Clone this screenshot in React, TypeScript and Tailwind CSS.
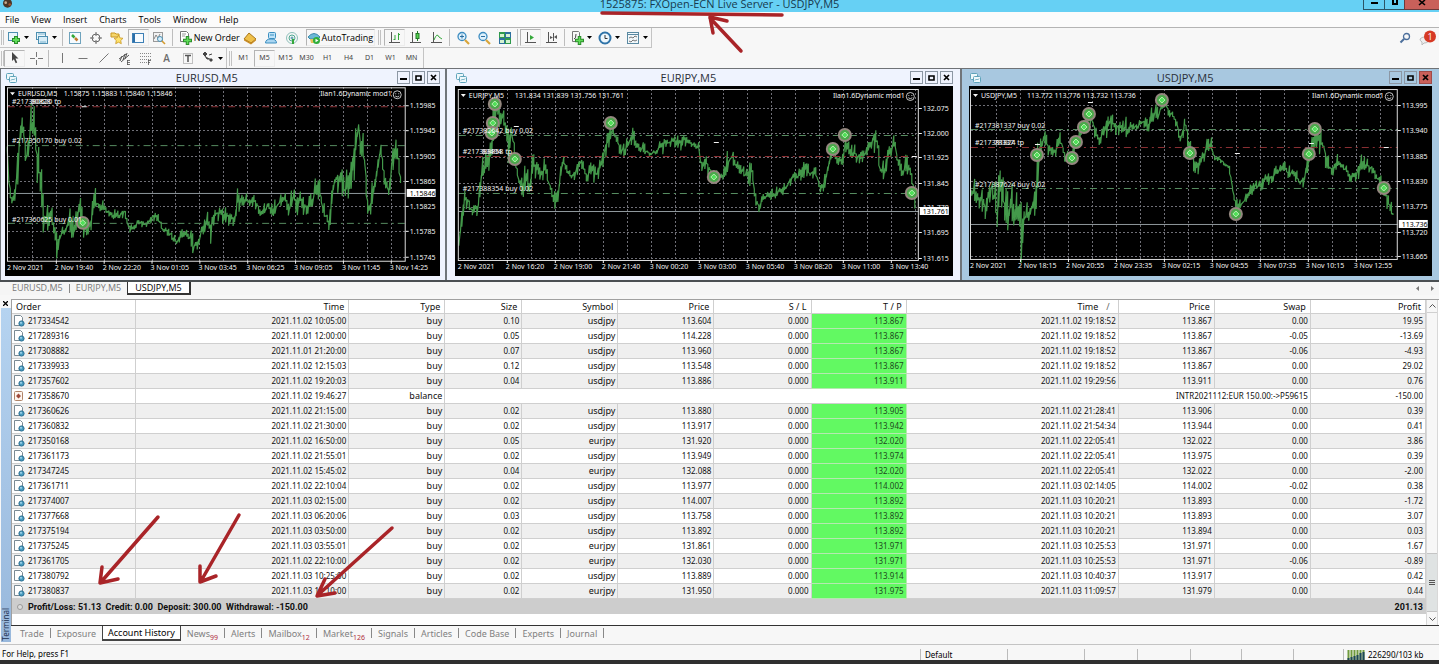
import React from "react";

type Point = [number, number, number];
type Marker = [number, number];

interface ChartData {
  symbol: string;
  ohlc: string;
  box: [number, number, number, number];
  frame: [number, number, number, number];
  gridX: number;
  prices: [number, string][];
  times: string[];
  last: [number, string];
  levels: { y: number; label?: string; labelY: number; red?: boolean; overlap?: string }[];
  markers: Marker[];
  ticks: Marker[];
  series: Point[];
}

const eurusd: ChartData = {
  symbol: "EURUSD,M5",
  ohlc: "1.15875 1.15883 1.15840 1.15846",
  box: [5, 86, 436, 190],
  frame: [8, 87, 407, 261],
  gridX: 32,
  prices: [
    [105, "1.15985"], [130, "1.15945"], [156, "1.15905"], [181, "1.15865"],
    [206, "1.15825"], [231, "1.15785"], [257, "1.15745"],
  ],
  times: ["2 Nov 2021", "2 Nov 19:40", "2 Nov 22:20", "3 Nov 01:05", "3 Nov 03:45", "3 Nov 06:25", "3 Nov 09:05", "3 Nov 11:45", "3 Nov 14:25"],
  last: [193, "1.15846"],
  levels: [
    { y: 106, label: "#217380620 tp", labelY: 104, red: true, overlap: "80828" },
    { y: 145, label: "#217350170 buy 0.02", labelY: 143 },
    { y: 223, label: "#217360625 buy 0.01", labelY: 222 },
  ],
  markers: [[83, 223]],
  ticks: [[84, 106]],
  series: [
    [22, 240, 30], [28, 380, 20], [38, 410, 25], [48, 350, 50], [56, 260, 70], [64, 160, 40], [72, 200, 60], [80, 270, 40], [88, 220, 40],
    [96, 150, 60], [104, 200, 60], [112, 300, 50], [122, 320, 60], [130, 450, 50], [140, 470, 35], [152, 430, 30], [160, 480, 30], [170, 535, 30],
    [185, 505, 20], [198, 490, 20], [212, 440, 45], [222, 500, 25], [238, 430, 45], [250, 470, 30], [262, 505, 25], [275, 460, 30], [285, 405, 45],
    [300, 415, 20], [315, 430, 15], [335, 445, 20], [355, 450, 20], [375, 435, 10], [385, 480, 15], [400, 485, 12], [415, 470, 10], [435, 475, 6],
    [445, 470, 8], [460, 450, 10], [475, 455, 15], [490, 490, 8], [510, 500, 12], [532, 530, 15], [550, 500, 10], [565, 500, 12], [582, 540, 30],
    [595, 535, 25], [605, 505, 15], [615, 465, 25], [635, 480, 40], [650, 440, 25], [670, 440, 25], [685, 450, 20], [708, 460, 15], [716, 390, 55],
    [730, 400, 20], [750, 405, 15], [770, 405, 20], [790, 445, 20], [805, 420, 20], [820, 435, 20], [840, 410, 20], [858, 400, 15], [870, 435, 20],
    [880, 390, 30], [895, 415, 25], [905, 400, 30], [920, 420, 20], [938, 420, 30], [950, 360, 40], [962, 375, 30], [970, 420, 20], [990, 475, 28],
    [1000, 400, 30], [1005, 340, 40], [1020, 335, 35], [1040, 370, 50], [1055, 340, 30], [1065, 280, 50], [1074, 215, 50], [1078, 160, 40], [1085, 235, 30], [1095, 250, 45],
    [1102, 340, 60], [1108, 430, 20], [1118, 410, 40], [1130, 340, 40], [1145, 250, 30], [1155, 310, 40], [1170, 380, 25], [1182, 260, 40],
    [1196, 250, 30], [1203, 320, 20], [1209, 350, 40],
  ],
};

const eurjpy: ChartData = {
  symbol: "EURJPY,M5",
  ohlc: "131.834 131.839 131.756 131.761",
  box: [456, 86, 497, 190],
  frame: [459, 89, 919, 260],
  gridX: 483,
  prices: [
    [108, "132.075"], [133, "132.000"], [157, "131.925"], [183, "131.845"],
    [207, "131.770"], [232, "131.695"], [258, "131.615"],
  ],
  times: ["2 Nov 2021", "2 Nov 16:20", "2 Nov 19:00", "2 Nov 21:40", "3 Nov 00:20", "3 Nov 03:00", "3 Nov 05:40", "3 Nov 08:20", "3 Nov 11:00", "3 Nov 13:40"],
  last: [211, "131.761"],
  levels: [
    { y: 135, label: "#217382642 buy 0.02", labelY: 133 },
    { y: 156, label: "#217388858 tp", labelY: 154, red: true, overlap: "83494" },
    { y: 193, label: "#217388354 buy 0.02", labelY: 191 },
  ],
  markers: [[495, 104], [493, 123], [492, 133], [515, 159], [611, 123], [714, 177], [833, 149], [845, 135], [912, 193]],
  ticks: [[516, 126], [716, 142], [914, 156]],
  series: [
    [42, 520, 50], [50, 480, 30], [60, 390, 60], [70, 400, 20], [80, 435, 15], [90, 425, 25], [100, 420, 30], [108, 330, 40], [118, 300, 35],
    [128, 300, 30], [138, 260, 30], [145, 180, 60], [152, 125, 25], [162, 150, 35], [172, 140, 20], [180, 180, 30], [190, 235, 40], [200, 190, 25],
    [210, 270, 30], [222, 340, 35], [235, 350, 30], [245, 335, 35], [256, 375, 50], [263, 300, 30], [272, 295, 30], [285, 330, 25], [300, 305, 30],
    [312, 350, 20], [322, 370, 25], [330, 415, 30], [340, 390, 35], [348, 310, 30], [357, 280, 25], [368, 320, 15], [382, 330, 15], [395, 315, 15],
    [410, 280, 20], [425, 330, 20], [440, 310, 30], [455, 325, 15], [468, 290, 25], [480, 250, 20], [492, 215, 35], [505, 190, 20], [515, 215, 20],
    [525, 250, 15], [540, 250, 25], [550, 230, 20], [565, 210, 20], [580, 240, 12], [600, 250, 15], [615, 265, 8], [635, 255, 6], [655, 230, 25],
    [670, 230, 14], [690, 220, 18], [705, 230, 18], [720, 215, 18], [735, 230, 12], [750, 235, 10], [762, 245, 14], [768, 295, 20], [785, 290, 20],
    [800, 315, 30], [820, 335, 12], [835, 330, 15], [848, 290, 30], [860, 270, 25], [875, 305, 15], [890, 310, 15], [905, 330, 18], [920, 310, 40],
    [930, 385, 18], [942, 420, 15], [955, 400, 12], [970, 385, 12], [985, 390, 18], [1000, 375, 14], [1020, 370, 14], [1040, 335, 15], [1060, 330, 15],
    [1072, 320, 20], [1085, 300, 20], [1095, 325, 18], [1110, 310, 15], [1125, 360, 15], [1140, 355, 25], [1150, 300, 20], [1162, 255, 30],
    [1175, 270, 20], [1190, 285, 30], [1203, 225, 25], [1215, 255, 20], [1230, 260, 22], [1245, 275, 18], [1260, 265, 22], [1272, 245, 20],
    [1285, 215, 30], [1298, 230, 25], [1305, 310, 40], [1320, 310, 25], [1330, 270, 20], [1350, 230, 25], [1358, 290, 15], [1375, 315, 25],
    [1388, 290, 25], [1400, 330, 20], [1408, 370, 30], [1414, 405, 35],
  ],
};

const usdjpy: ChartData = {
  symbol: "USDJPY,M5",
  ohlc: "113.772 113.776 113.732 113.736",
  box: [969, 86, 463, 190],
  frame: [971, 89, 1398, 259],
  gridX: 996,
  prices: [
    [105, "113.995"], [130, "113.940"], [156, "113.885"], [181, "113.830"],
    [206, "113.775"], [232, "113.720"], [256, "113.665"],
  ],
  times: ["2 Nov 2021", "2 Nov 18:15", "2 Nov 20:55", "2 Nov 23:35", "3 Nov 02:15", "3 Nov 04:55", "3 Nov 07:35", "3 Nov 10:15", "3 Nov 12:55"],
  last: [224, "113.736"],
  levels: [
    { y: 129, label: "#217381337 buy 0.02", labelY: 128 },
    { y: 147, label: "#217381824 tp", labelY: 145, red: true, overlap: "78337" },
    { y: 188, label: "#217387624 buy 0.02", labelY: 187 },
  ],
  markers: [[1037, 155], [1072, 158], [1076, 142], [1084, 127], [1089, 114], [1162, 100], [1190, 153], [1236, 214], [1309, 154], [1315, 129], [1384, 188]],
  ticks: [[1037, 144], [1090, 102], [1237, 153], [1311, 143], [1386, 147]],
  series: [
    [50, 370, 50], [60, 390, 50], [72, 395, 40], [82, 390, 45], [92, 430, 40], [105, 360, 45], [115, 370, 40], [127, 440, 75], [137, 360, 50],
    [148, 410, 50], [160, 450, 50], [170, 410, 50], [182, 430, 50], [192, 450, 40], [198, 490, 70], [208, 450, 50], [218, 450, 45], [230, 420, 30],
    [240, 390, 45], [248, 310, 60], [256, 250, 30], [266, 220, 25], [278, 235, 22], [290, 265, 16], [303, 250, 22], [317, 220, 25], [330, 265, 25],
    [342, 290, 18], [355, 250, 30], [368, 220, 25], [380, 200, 28], [392, 160, 28], [408, 150, 22], [420, 190, 22], [432, 220, 20], [445, 200, 22],
    [458, 180, 22], [468, 155, 28], [482, 180, 18], [500, 185, 18], [515, 190, 35], [530, 180, 10], [548, 182, 8], [560, 165, 15], [580, 180, 15],
    [590, 140, 25], [602, 140, 20], [612, 145, 16], [622, 115, 20], [635, 120, 20], [650, 145, 10], [665, 165, 15], [675, 225, 25], [690, 170, 25],
    [702, 225, 25], [712, 270, 20], [722, 305, 25], [735, 285, 20], [748, 265, 22], [758, 225, 25], [768, 240, 30], [780, 275, 8], [800, 282, 8],
    [818, 300, 8], [828, 330, 20], [836, 395, 15], [845, 415, 18], [858, 415, 10], [872, 400, 12], [885, 385, 20], [898, 358, 12], [915, 360, 15],
    [935, 335, 16], [955, 330, 16], [970, 315, 18], [985, 300, 14], [1000, 320, 20], [1018, 320, 16], [1035, 350, 18], [1050, 335, 20], [1060, 290, 25],
    [1072, 245, 30], [1084, 210, 30], [1096, 225, 30], [1106, 235, 40], [1118, 290, 25], [1130, 310, 20], [1145, 290, 22], [1160, 295, 22],
    [1175, 315, 20], [1190, 330, 22], [1205, 320, 22], [1220, 290, 25], [1235, 295, 18], [1250, 305, 14], [1265, 335, 15], [1280, 350, 22],
    [1292, 385, 22], [1302, 415, 20], [1310, 430, 20], [1317, 450, 32],
  ],
};

function barPath(series: Point[], originX: number): string {
  let seed = 11;
  const rnd = () => {
    seed = (seed * 16807) % 2147483647;
    return seed / 2147483647;
  };
  let d = "";
  let i = 0;
  const end = series[series.length - 1][0];
  for (let x = series[0][0]; x <= end; x += 4.5) {
    while (i < series.length - 2 && series[i + 1][0] < x) i++;
    const [ax, ay, ar] = series[i];
    const [bx, by, br] = series[i + 1];
    const t = Math.min(1, Math.max(0, (x - ax) / (bx - ax)));
    const mid = ay + (by - ay) * t;
    const range = ar + (br - ar) * t;
    const up = rnd();
    const down = rnd();
    const top = 66 + (mid - range * (up * up * 1.4 - 0.05)) / 3;
    const low = 66 + (mid + range * (down * down * 1.4 + 0.1)) / 3;
    const px = (originX + x / 3).toFixed(1);
    d += `${d ? "L" : "M"}${px} ${top.toFixed(1)}L${px} ${low.toFixed(1)}`;
  }
  return d;
}

function Chart({ data, origin }: { data: ChartData; origin: number }) {
  const [x0, y0, x1, y1] = data.frame;
  const cols: number[] = [];
  for (let x = data.gridX; x < x1; x += 24) cols.push(x);
  return (
    <svg viewBox={data.box.join(" ")} className="block h-[190px] w-full bg-black" role="img" aria-label={`${data.symbol} chart`} fontFamily="Noto Sans, sans-serif" fontSize="7" fill="#f4f4f4">
      <g stroke="#6f6f76" strokeWidth="1" strokeDasharray="2 2" shapeRendering="crispEdges">
        {cols.map((x) => <line key={x} x1={x + 0.5} x2={x + 0.5} y1={y0} y2={y1} />)}
        {data.prices.map(([y]) => <line key={y} x1={x0} x2={x1} y1={y + 0.5} y2={y + 0.5} />)}
      </g>
      <line x1={x0} x2={x1} y1={data.last[0] + 0.5} y2={data.last[0] + 0.5} stroke="#8f989c" />
      <path d={barPath(data.series, origin)} fill="none" stroke="#43994a" strokeWidth="1.2" strokeLinejoin="bevel" />
      {data.levels.map((l) => (
        <line key={l.y} x1={x0} x2={x1} y1={l.y + 0.5} y2={l.y + 0.5} stroke={l.red ? "#8c2f33" : "#568c60"} strokeDasharray="7 4 2 4" />
      ))}
      <rect x={x0 - 0.5} y={y0 + 0.5} width={x1 - x0} height={y1 - y0} fill="none" stroke="#dcdcdc" />
      {data.ticks.map(([x, y]) => <rect key={x} x={x - 2} y={y} width="5" height="1" />)}
      {data.markers.map(([x, y]) => (
        <g key={`${x}-${y}`}>
          <circle cx={x} cy={y} r="7" fill="#94877f" />
          <circle cx={x} cy={y} r="5" fill="#4aa84a" />
          <path d={`M${x - 3} ${y}l3 -3 3 3 -3 3z`} fill="#4fe058" stroke="#b8f0b0" />
        </g>
      ))}
      {data.levels.map((l) => (
        <g key={l.labelY}>
          <text x={x0 + 4} y={l.labelY}>{l.label}</text>
          {l.overlap && <text x={x0 + 23} y={l.labelY} aria-hidden="true">{l.overlap}</text>}
        </g>
      ))}
      <path d={`M${x0 + 2} ${y0 + 5}h5l-2.500 3z`} />
      <text x={x0 + 10} y={y0 + 9}>{data.symbol}</text>
      <text x={x0 + 56} y={y0 + 9}>{data.ohlc}</text>
      <text x={x1 - 14} y={y0 + 9} textAnchor="end">Ilan1.6Dynamic mod1</text>
      <g transform={`translate(${x1 - 8.5} ${y0 + 7.500})`} fill="none" stroke="#f4f4f4" strokeWidth="0.800">
        <circle r="4" />
        <path d="M-2 1.200q2 2 4 0M-1.500 -1.500v1M1.500 -1.500v1" />
      </g>
      {data.prices.map(([y, p]) => (
        <g key={p}>
          <rect x={x1} y={y} width="3" height="1" />
          <text x={x1 + 4} y={y + 3}>{p}</text>
        </g>
      ))}
      <rect x={x1 + 1} y={data.last[0] - 4} width="29" height="8" fill="#fff" />
      <text x={x1 + 4} y={data.last[0] + 3} fill="#000">{data.last[1]}</text>
      {data.times.map((t, i) => (
        <g key={t}>
          {i > 0 && <rect x={data.gridX - 24 + i * 48} y={y1} width="1" height="3" />}
          <text x={x0 - 1 + i * 48} y={y1 + 9}>{t}</text>
        </g>
      ))}
    </svg>
  );
}

function WindowsGlyph() {
  return (
    <svg viewBox="0 0 12 12" className="h-3 w-3" fill="#eef8fb" stroke="#5ea3ba">
      <rect x="1.500" y="1.500" width="7" height="6" rx="1" />
      <rect x="4.500" y="4.500" width="7" height="6" rx="1" />
      <path d="M6 8.500l1.500-1.500 1 1 1.500-1.500" fill="none" />
    </svg>
  );
}

function WindowButtons({ active }: { active?: boolean }) {
  const base = "flex h-[13px] w-[13px] items-center justify-center border border-[#8c97a4]";
  return (
    <div className="flex gap-[2px]">
      <button aria-label="Minimize" className={base}><svg viewBox="0 0 9 9" className="h-[9px] w-[9px]"><path d="M1 5h7v2H1z" /></svg></button>
      <button aria-label="Maximize" className={base}><svg viewBox="0 0 9 9" className="h-[9px] w-[9px]"><path d="M2 3h5v4H2z" fill="none" stroke="#000" strokeWidth="1.600" /></svg></button>
      <button aria-label="Close" className={active ? "flex h-[13px] w-[13px] items-center justify-center border border-[#a04a48] bg-[#c9605a]" : base}>
        <svg viewBox="0 0 9 9" className="h-[9px] w-[9px]"><path d="M2 2l5 5M7 2l-5 5" stroke="#000" strokeWidth="1.700" /></svg>
      </button>
    </div>
  );
}

function WindowTitle({ title, active }: { title: string; active?: boolean }) {
  return (
    <div className="flex h-[17px] items-center">
      <WindowsGlyph />
      <h2 className="flex-1 text-center font-['Open_Sans',sans-serif] text-[11px] leading-4 text-[#2a2f38]">{title}</h2>
      <WindowButtons active={active} />
    </div>
  );
}

const g = "#35a83a";
const icons: Record<string, React.ReactNode> = {
  newChart: <><rect x="1.500" y="1.500" width="9" height="8" fill="#eaf6fb" stroke="#4d8fb0" /><path d="M9 5v8M5 9h8" stroke="#2c8d2c" strokeWidth="4" /><path d="M9 6v6M6 9h6" stroke="#5fdc58" strokeWidth="2" /></>,
  profiles: <><rect x="1.500" y="1.500" width="9" height="7" fill="#eaf6fb" stroke="#4d8fb0" /><rect x="3.500" y="5.500" width="9" height="7" fill="#d8edf7" stroke="#4d8fb0" /><path d="M3 3h7M5 11h6" stroke="#7fb4cf" /></>,
  market: <><rect x="1.500" y="1.500" width="11" height="11" fill="#f6fbff" stroke="#6fa3bd" /><path d="M4 4l2.500 2.500" stroke={g} strokeWidth="2.500" /><path d="M7 7l2.500 2.500" stroke="#c47a2e" strokeWidth="2.500" /></>,
  target: <g fill="none" stroke="#666"><circle cx="7" cy="7" r="4" /><path d="M7 1v4M7 9v4M1 7h4M9 7h4" /></g>,
  star: <><path d="M1 2h4l1 1h3v3H1z" fill="#f5d66b" stroke="#c99722" /><path d="M8.500 4l1.400 2.900 3.100.4-2.300 2.200.6 3.200-2.800-1.500-2.800 1.500.6-3.200L4 7.300l3.100-.4z" fill="#ffe36b" stroke="#c99722" strokeWidth="0.800" /></>,
  navigator: <><rect x="1.500" y="2.500" width="11" height="9" fill="#f6fbff" stroke="#3d7fb5" /><rect x="2" y="3" width="2" height="8" fill="#2b6ea8" /></>,
  tester: <><rect x="1.500" y="1.500" width="9" height="9" fill="#f2f2f2" stroke="#9a9a9a" /><path d="M2 8l2-4 2 3 2-4" fill="none" stroke="#888" /><circle cx="8" cy="8" r="2.500" fill="#d7eefb" stroke="#4d8fb0" /><path d="M10 10l3 3" stroke="#d39a2e" strokeWidth="1.600" /></>,
  order: <><path d="M2.500 .5h6l2 2v8h-8z" fill="#fff" stroke="#777" /><path d="M4 3h4M4 5h3" stroke="#999" /><path d="M9.500 5v9M5 9.500h9" stroke="#2c8d2c" strokeWidth="3.500" /><path d="M9.500 6v7M6 9.500h7" stroke="#5fdc58" strokeWidth="1.500" /></>,
  book: <><path d="M1 8l5-6 7 6-5 4z" fill="#efc04a" stroke="#a8761a" /><path d="M1 8v1.500l7 4 5-4V8l-5 4z" fill="#c98b22" /></>,
  community: <><rect x="4.500" y="1.500" width="7" height="6" rx="1" fill="#bfe3f8" stroke="#3c8fc0" /><path d="M1.500 12q0-4 5.500-4t5.500 4z" fill="#a9d6f2" stroke="#3c8fc0" /><path d="M6 4h4" stroke="#3c8fc0" /></>,
  signal: <g fill="none" stroke="#8fc0ba"><circle cx="7" cy="7" r="5.500" /><circle cx="7" cy="7" r="3" stroke="#4fa890" /><circle cx="7" cy="7" r="1" stroke="#3e8fa0" /><path d="M8 8v5" stroke={g} strokeWidth="2" /></g>,
  auto: <><path d="M1 6q6-7 12 0l-2 2H3z" fill="#6bb8d6" stroke="#3a88ab" /><path d="M3 8h8l-1 4H4z" fill="#e6c25a" /><circle cx="9.500" cy="9.500" r="3.500" fill="#2fae3a" /><path d="M8.500 7.800l3 1.700-3 1.700z" fill="#fff" /></>,
  bars: <g fill="none" stroke="#555"><path d="M3.500 1v11M1 11.500h11" /><path d="M7 4v5M10.500 2v7M5.500 8.500H7M10.500 3.500H12" stroke={g} /></g>,
  candles: <><path d="M3.500 1v11M1 11.500h11" fill="none" stroke="#555" /><path d="M8.500 0v10" stroke="#227a26" /><rect x="7" y="2.500" width="3" height="5" fill="#55d050" stroke="#227a26" /></>,
  line: <g fill="none" stroke="#555"><path d="M3.500 1v11M1 11.500h11" /><path d="M4 9q3-8 5-3l3 2" stroke={g} /></g>,
  zoomIn: <><circle cx="6" cy="5.500" r="4" fill="#dff1fc" stroke="#3d8cc0" strokeWidth="1.300" /><path d="M9 9l4 4" stroke="#d8a53a" strokeWidth="2.200" /><path d="M4 5.500h4M6 3.500v4" stroke="#2a6ea0" /></>,
  zoomOut: <><circle cx="6" cy="5.500" r="4" fill="#dff1fc" stroke="#3d8cc0" strokeWidth="1.300" /><path d="M9 9l4 4" stroke="#d8a53a" strokeWidth="2.200" /><path d="M4 5.500h4" stroke="#2a6ea0" /></>,
  tile: <><rect x="1" y="1" width="6" height="6" fill="#2f9a4c" /><rect x="7" y="1" width="6" height="6" fill="#2d6f9e" /><rect x="1" y="7" width="6" height="6" fill="#2d6f9e" /><rect x="7" y="7" width="6" height="6" fill="#2f9a4c" /><path d="M2 3h4v3H2zM8 3h4v3H8zM2 9h4v3H2zM8 9h4v3H8z" fill="#d5f2d0" /></>,
  scroll: <><path d="M3.500 1v11M1 11.500h11" stroke="#555" /><path d="M6 4l4 2.500L6 9z" fill={g} /></>,
  shift: <><path d="M3.500 1v11M1 11.500h11M8.500 2v8" stroke="#555" /><path d="M9 6l3-2v4zM5 5l3 1.500L5 8z" fill="#555" /></>,
  indicators: <><path d="M2.500 .5h6l1 1v9h-7z" fill="#f8f8f8" stroke="#777" /><path d="M4 8q2 0 2-5" fill="none" stroke="#444" /><path d="M9.500 5v9M5 9.500h9" stroke="#2c8d2c" strokeWidth="3.500" /><path d="M9.500 6v7M6 9.500h7" stroke="#5fdc58" strokeWidth="1.500" /></>,
  clock: <><circle cx="7" cy="7" r="5.500" fill="#eef7fd" stroke="#2f73a8" strokeWidth="2" /><path d="M7 4v3.500h2.500" fill="none" stroke="#333" /></>,
  template: <><rect x="1.500" y="1.500" width="11" height="11" fill="#f2f8fb" stroke="#5b8aa2" /><path d="M1 3.500h12" stroke="#5b8aa2" /><path d="M3 7l2-1 2 1 2-2 2 1M3 10l2 1 2-2 2 1 2-1" fill="none" stroke="#777" /></>,
  cursor: <path d="M4 1l6.500 6.500H7.500l1.700 4-1.500.7-1.800-4L4 10z" fill="#444" />,
  cross: <path d="M7.500 1v5M7.500 9v5M1 7.500h5M9 7.500h5" stroke="#777" />,
  vline: <path d="M7.500 2v10" stroke="#777" />,
  hline: <path d="M2.500 7.500h9" stroke="#777" />,
  trend: <path d="M2.500 11.500l9-9" stroke="#777" />,
  channel: <><path d="M1 8l7-5M3 11l8-7M2 10l2-5M5 9l2-6M7 8l2-6" stroke="#555" /><path d="M9 9.500h3M9 11.500h3M9 13.500h3M9.500 9v5" stroke="#555" strokeWidth="0.800" /></>,
  fibo: <><path d="M1 2.500h11M1 5.500h11M1 8.500h11M1 11.500h7" stroke="#888" strokeDasharray="1 1" /><path d="M9.500 9v5M9 9.500h3M9 11.500h2" stroke="#555" strokeWidth="0.800" /></>,
  label: <><rect x="2.500" y="2.500" width="9" height="10" fill="none" stroke="#888" strokeDasharray="1 1" /><path d="M4 4.500h6M7 4v7" stroke="#555" strokeWidth="1.500" /></>,
  arrows: <><path d="M2 3l2 2 2-2-2-2zM4 5l2 3h3" fill="#444" stroke="#444" /><path d="M8 9l2 2 2-2-2-2z" fill="#444" /><path d="M8 4l3-1" stroke="#444" /></>,
};

function Glyph({ name }: { name: string }) {
  return <svg viewBox="0 0 14 14" className="h-[14px] w-[14px] shrink-0" aria-hidden="true">{icons[name]}</svg>;
}

function Tool({ name, label, pressed }: { name: string; label: string; pressed?: boolean }) {
  return (
    <button aria-label={label} className={pressed ? "flex h-[17px] w-[21px] items-center justify-center border border-[#ececec] border-t-[#b4b4b4] border-l-[#b4b4b4]" : "flex h-[17px] w-[21px] items-center justify-center"}>
      {name === "text" ? <span className="font-['Open_Sans',sans-serif] text-[10px] font-semibold text-[#6c6c6c]">A</span> : <Glyph name={name} />}
    </button>
  );
}

function Combo({ name, label }: { name: string; label: string }) {
  return (
    <button aria-label={label} className="flex h-[17px] w-7 items-center gap-[3px] pl-[3px]">
      <Glyph name={name} />
      <svg viewBox="0 0 5 3" className="h-[3px] w-[5px]"><path d="M0 0h5L2.500 3z" /></svg>
    </button>
  );
}

const Sep = () => <span className="mx-[2px] h-[17px] w-px bg-[#bdbdbd]" />;
const Grip = () => <span className="mx-[3px] h-[15px] w-[3px] border-x border-[#c2c2c2]" />;

type Row = [string, string, string, string, string, string, string, string, string, string, string];
const rows: Row[] = [
  ["217334542", "2021.11.02 10:05:00", "buy", "0.10", "usdjpy", "113.604", "113.867", "2021.11.02 19:18:52", "113.867", "0.00", "19.95"],
  ["217289316", "2021.11.01 12:00:00", "buy", "0.05", "usdjpy", "114.228", "113.867", "2021.11.02 19:18:52", "113.867", "-0.05", "-13.69"],
  ["217308882", "2021.11.01 21:20:00", "buy", "0.07", "usdjpy", "113.960", "113.867", "2021.11.02 19:18:52", "113.867", "-0.06", "-4.93"],
  ["217339933", "2021.11.02 12:15:03", "buy", "0.12", "usdjpy", "113.548", "113.867", "2021.11.02 19:18:52", "113.867", "0.00", "29.02"],
  ["217357602", "2021.11.02 19:20:03", "buy", "0.04", "usdjpy", "113.886", "113.911", "2021.11.02 19:29:56", "113.911", "0.00", "0.76"],
  ["217358670", "2021.11.02 19:46:27", "balance", "", "", "", "", "", "", "INTR2021112:EUR 150.00:->P59615", "-150.00"],
  ["217360626", "2021.11.02 21:15:00", "buy", "0.02", "usdjpy", "113.880", "113.905", "2021.11.02 21:28:41", "113.906", "0.00", "0.39"],
  ["217360832", "2021.11.02 21:30:00", "buy", "0.02", "usdjpy", "113.917", "113.942", "2021.11.02 21:54:34", "113.944", "0.00", "0.41"],
  ["217350168", "2021.11.02 16:50:00", "buy", "0.05", "eurjpy", "131.920", "132.020", "2021.11.02 22:05:41", "132.022", "0.00", "3.86"],
  ["217361173", "2021.11.02 21:55:01", "buy", "0.02", "usdjpy", "113.949", "113.974", "2021.11.02 22:05:41", "113.975", "0.00", "0.39"],
  ["217347245", "2021.11.02 15:45:02", "buy", "0.04", "eurjpy", "132.088", "132.020", "2021.11.02 22:05:41", "132.022", "0.00", "-2.00"],
  ["217361711", "2021.11.02 22:10:04", "buy", "0.02", "usdjpy", "113.977", "114.002", "2021.11.03 02:14:05", "114.002", "-0.02", "0.38"],
  ["217374007", "2021.11.03 02:15:00", "buy", "0.02", "usdjpy", "114.007", "113.892", "2021.11.03 10:20:21", "113.893", "0.00", "-1.72"],
  ["217377668", "2021.11.03 06:20:06", "buy", "0.03", "usdjpy", "113.758", "113.892", "2021.11.03 10:20:21", "113.893", "0.00", "3.07"],
  ["217375194", "2021.11.03 03:50:00", "buy", "0.02", "usdjpy", "113.892", "113.892", "2021.11.03 10:20:21", "113.894", "0.00", "0.03"],
  ["217375245", "2021.11.03 03:55:01", "buy", "0.02", "eurjpy", "131.861", "131.971", "2021.11.03 10:25:53", "131.971", "0.00", "1.67"],
  ["217361705", "2021.11.02 22:10:00", "buy", "0.02", "eurjpy", "132.030", "131.971", "2021.11.03 10:25:53", "131.971", "-0.06", "-0.89"],
  ["217380792", "2021.11.03 10:25:00", "buy", "0.02", "usdjpy", "113.889", "113.914", "2021.11.03 10:40:37", "113.917", "0.00", "0.42"],
  ["217380837", "2021.11.03 11:10:00", "buy", "0.02", "eurjpy", "131.950", "131.975", "2021.11.03 11:09:57", "131.979", "0.00", "0.44"],
];

const headers = ["Time", "Type", "Size", "Symbol", "Price", "S / L", "T / P", "Time", "Price", "Swap", "Profit"];

function DocIcon({ balance }: { balance: boolean }) {
  return balance ? (
    <svg viewBox="0 0 12 12" className="h-3 w-3 shrink-0"><rect x="1.500" y="1.500" width="8" height="9" rx="1" fill="#fdf5ee" stroke="#b08468" /><path d="M5.500 3v6M3 6l2.500-2.500L8 6 5.500 8.500z" fill="#a04a3a" /></svg>
  ) : (
    <svg viewBox="0 0 12 12" className="h-3 w-3 shrink-0"><path d="M1.500 .5h6l2 2v8h-8z" fill="#fff" stroke="#7a8a94" /><circle cx="8.500" cy="8.500" r="2.600" fill="#4a9cc0" stroke="#2c6f92" /><circle cx="8" cy="7.800" r="0.900" fill="#b8e4f4" /></svg>
  );
}

const cell = "h-[15px] border-r border-b border-[#cfcfcf] p-0 pr-[2px] text-right";
const wordCell = "h-[15px] border-r border-b border-[#cfcfcf] p-0 pr-[2px] text-right text-[9px]";

function HistoryTable() {
  return (
    <table className="w-full table-fixed border-separate border-spacing-0 text-[8px] leading-[14px] text-[#101010]">
      <colgroup>
        <col className="w-[124px]" /><col className="w-[213px]" /><col className="w-[96px]" /><col className="w-[77px]" />
        <col className="w-[96px]" /><col className="w-[96px]" /><col className="w-[97px]" /><col className="w-[95px]" />
        <col className="w-[212px]" /><col className="w-[96px]" /><col className="w-[96px]" /><col className="w-[115px]" />
      </colgroup>
      <thead className="text-[9px]">
        <tr>
          <th className="h-[14px] border-r border-b border-[#cfcfcf] p-0 pl-1 text-left font-normal leading-[13px]">Order</th>
          {headers.map((h, i) => (
            <th key={i} className="h-[14px] border-r border-b border-[#cfcfcf] p-0 pr-1 text-right font-normal leading-[13px]">
              {h}{i === 7 && <span className="ml-2 mr-1 text-[#666]">/</span>}
            </th>
          ))}
        </tr>
      </thead>
      <tbody>
        {rows.map((r) => {
          const balance = r[2] === "balance";
          return (
            <tr key={r[0]} className="odd:bg-[#efefef] even:bg-white">
              <td className="h-[15px] border-r border-b border-[#cfcfcf] p-0">
                <div className="flex items-center gap-[3px] pl-px"><DocIcon balance={balance} />{r[0]}</div>
              </td>
              <td className={cell}>{r[1]}</td>
              <td className={wordCell}>{r[2]}</td>
              {balance ? (
                <td colSpan={8} className={cell}>{r[9]}</td>
              ) : (
                <>
                  <td className={cell}>{r[3]}</td>
                  <td className={wordCell}>{r[4]}</td>
                  <td className={cell}>{r[5]}</td>
                  <td className={cell}>0.000</td>
                  <td className="h-[15px] border-r border-b border-[#b5e8b0] bg-[#62f962] p-0 pr-[2px] text-right text-[#1d4a1d]">{r[6]}</td>
                  <td className={cell}>{r[7]}</td>
                  <td className={cell}>{r[8]}</td>
                  <td className={cell}>{r[9]}</td>
                </>
              )}
              <td className={cell}>{r[10]}</td>
            </tr>
          );
        })}
      </tbody>
      <tfoot>
        <tr className="bg-[#cdcdcd] font-['Roboto',sans-serif] text-[9px] font-bold">
          <td colSpan={11} className="h-[15px] p-0">
            <div className="flex items-center gap-[5px] pl-[5px]">
              <span className="h-[6px] w-[6px] rounded-full border border-[#999] bg-[#ddd]" />
              <span className="whitespace-pre">Profit/Loss: 51.13  Credit: 0.00  Deposit: 300.00  Withdrawal: -150.00</span>
            </div>
          </td>
          <td className="h-[15px] p-0 pr-[3px] text-right">201.13</td>
        </tr>
      </tfoot>
    </table>
  );
}

const bottomTabs: [string, string?][] = [
  ["Trade"], ["Exposure"], ["Account History"], ["News", "99"], ["Alerts"], ["Mailbox", "12"], ["Market", "126"],
  ["Signals"], ["Articles"], ["Code Base"], ["Experts"], ["Journal"],
];

const arrow = (d: string) => <path key={d} d={d} fill="none" stroke="#a92428" strokeWidth="3.500" strokeLinecap="round" strokeLinejoin="round" />;

export default function App() {
  return (
    <div className="relative overflow-x-hidden bg-[#f7f7f7] font-['Noto_Sans',sans-serif] text-[9px] text-black">
      <header className="grid h-3 grid-cols-[1fr_auto_1fr] items-start overflow-hidden bg-[#66d0f4]">
        <svg viewBox="0 0 12 10" className="ml-[2px] h-[9px] w-[11px]"><circle cx="6" cy="3.500" r="5" fill="#4a3527" /><circle cx="4" cy="3" r="1.500" fill="#c7a98c" /><circle cx="8.500" cy="5" r="1.500" fill="#a5512d" /></svg>
        <h1 className="mt-[-4px] font-['Open_Sans',sans-serif] text-[11px] leading-4 text-[#173a4e]">1525875: FXOpen-ECN Live Server - USDJPY,M5</h1>
        <div className="flex h-[10px] justify-end">
          <button aria-label="Minimize" className="flex w-[21px] items-start justify-center border-b border-l border-[#2b5566]"><span className="mt-[2px] h-[2px] w-[7px] bg-black" /></button>
          <button aria-label="Restore" className="flex w-5 items-start justify-center border-b border-l border-[#2b5566]"><span className="h-[5px] w-[6px] border-2 border-t-0 border-black" /></button>
          <button aria-label="Close" className="flex w-[35px] items-start justify-center border-b border-l border-[#6b3a3a] bg-[#c9605a]"><svg viewBox="0 0 8 6" className="h-[6px] w-2"><path d="M1 0l6 5M7 0L1 5" stroke="#000" strokeWidth="1.600" /></svg></button>
        </div>
      </header>

      <nav className="flex h-4 items-center gap-3 border-b border-[#b4b4b4] bg-[#fbfbfb] pl-[5px] font-['Open_Sans',sans-serif] text-[9px] leading-[14px]">
        {["File", "View", "Insert", "Charts", "Tools", "Window", "Help"].map((m) => <button key={m}>{m}</button>)}
      </nav>

      <div className="flex justify-between">
        <div>
          <div className="flex h-5 w-[652px] items-center border-r border-b border-[#c4c4c4]">
            <span className="ml-px h-[15px] w-[3px] border-x border-[#c2c2c2]" />
            <Combo name="newChart" label="New chart" />
            <Combo name="profiles" label="Profiles" />
            <Sep />
            <Tool name="market" label="Market Watch" />
            <Tool name="target" label="Data Window" />
            <Tool name="star" label="Favorites" />
            <Tool name="navigator" label="Terminal" pressed />
            <Tool name="tester" label="Strategy Tester" />
            <Sep />
            <button className="flex w-[65px] items-center gap-[2px] whitespace-nowrap pl-[3px] font-['Open_Sans',sans-serif] text-[9px]"><Glyph name="order" />New Order</button>
            <Tool name="book" label="MetaEditor" />
            <Tool name="community" label="Community" />
            <Tool name="signal" label="Signals" />
            <button className="ml-[3px] flex h-[17px] w-[70px] items-center gap-px whitespace-nowrap border border-[#ececec] border-t-[#b4b4b4] border-l-[#b4b4b4] font-['Open_Sans',sans-serif] text-[9px]"><Glyph name="auto" />AutoTrading</button>
            <Grip />
            <Tool name="bars" label="Bar chart" pressed />
            <Tool name="candles" label="Candlesticks" />
            <Tool name="line" label="Line chart" />
            <Sep />
            <Tool name="zoomIn" label="Zoom in" />
            <Tool name="zoomOut" label="Zoom out" />
            <Tool name="tile" label="Tile windows" />
            <Sep />
            <Tool name="scroll" label="Auto scroll" pressed />
            <Tool name="shift" label="Chart shift" />
            <Sep />
            <Combo name="indicators" label="Indicators" />
            <Combo name="clock" label="Periods" />
            <Combo name="template" label="Templates" />
          </div>
          <div className="flex h-5 w-[424px] items-center border-r border-[#c4c4c4]">
            <span className="ml-px h-[15px] w-[3px] border-x border-[#c2c2c2]" />
            <Tool name="cursor" label="Cursor" pressed />
            <Tool name="cross" label="Crosshair" />
            <Sep />
            <Tool name="vline" label="Vertical line" />
            <Tool name="hline" label="Horizontal line" />
            <Tool name="trend" label="Trendline" />
            <Tool name="channel" label="Channel" />
            <Tool name="fibo" label="Fibonacci" />
            <Tool name="text" label="Text" />
            <Tool name="label" label="Text label" />
            <Combo name="arrows" label="Arrows" />
            <span className="h-5 w-px bg-[#c4c4c4]" />
            <span className="mr-px ml-[2px] h-[15px] w-[3px] border-x border-[#c2c2c2]" />
            {["M1", "M5", "M15", "M30", "H1", "H4", "D1", "W1", "MN"].map((t) => (
              <button key={t} className={t === "M5" ? "h-[17px] w-[21px] border border-[#ececec] border-t-[#b4b4b4] border-l-[#b4b4b4] text-[7px] text-[#444]" : "h-[17px] w-[21px] text-[7px] text-[#444]"}>{t}</button>
            ))}
          </div>
        </div>
        <div className="flex h-5 items-center gap-2 pr-[3px]">
          <button aria-label="Search"><svg viewBox="0 0 12 12" className="h-3 w-3" fill="none" stroke="#4c6f9c"><circle cx="7.500" cy="4.500" r="3" strokeWidth="1.300" /><path d="M5 7l-3.500 3.500" strokeWidth="2" /></svg></button>
          <button aria-label="Notifications" className="flex h-4 w-[17px] items-center">
            <svg viewBox="0 0 17 16" className="h-4 w-[17px]"><path d="M1 9q4-4 9 0 0 4-5 4l-2 2v-3q-2-1-2-3z" fill="#eee" stroke="#bbb" /><circle cx="11" cy="6.500" r="6" fill="#d63a25" /><text x="11" y="10" textAnchor="middle" fill="#fff" fontSize="9" fontFamily="Open Sans, sans-serif">1</text></svg>
          </button>
        </div>
      </div>

      <main className="flex border-t border-[#6f7276]">
        <section className="min-w-0 flex-[448_1_0%] border-r-2 border-l border-[#70757a] bg-[#eff3fe] pr-[5px] pb-1 pl-1">
          <WindowTitle title="EURUSD,M5" />
          <Chart data={eurusd} origin={0} />
        </section>
        <section className="min-w-0 flex-[514_1_0%] border-r-2 border-[#70757a] bg-[#eff3fe] pr-[7px] pb-1 pl-2">
          <WindowTitle title="EURJPY,M5" />
          <Chart data={eurjpy} origin={445} />
        </section>
        <section className="min-w-0 flex-[477_1_0%] bg-[#a8c8e0] px-[7px] pb-1">
          <WindowTitle title="USDJPY,M5" active />
          <Chart data={usdjpy} origin={955} />
        </section>
      </main>

      <div className="flex h-[15px] items-start border-t-2 border-[#4a4f52] bg-[#f5f5f5] font-['Open_Sans',sans-serif] text-[9px] leading-3 text-[#7a7a7a]">
        <button className="ml-[6px] px-[6px]">EURUSD,M5</button>
        <span className="mt-[2px] h-[9px] w-px bg-[#888]" />
        <button className="px-[6px]">EURJPY,M5</button>
        <button className="h-[13px] border-r-2 border-b-2 border-l border-[#333] bg-white px-[7px] text-black">USDJPY,M5</button>
        <div className="ml-auto flex gap-3 pt-1 pr-[5px]">
          <button aria-label="Scroll left"><svg viewBox="0 0 3 5" className="h-[5px] w-[3px]"><path d="M3 0v5L0 2.500z" fill="#777" /></svg></button>
          <button aria-label="Scroll right"><svg viewBox="0 0 3 5" className="h-[5px] w-[3px]"><path d="M0 0v5l3-2.500z" fill="#777" /></svg></button>
        </div>
      </div>

      <section className="mt-1 flex">
        <aside className="flex w-[11px] shrink-0 flex-col pl-px">
          <button aria-label="Close terminal" className="flex h-[9px] items-center pl-[2px]"><svg viewBox="0 0 5 5" className="h-[5px] w-[5px]"><path d="M0 0l5 5M5 0L0 5" stroke="#000" strokeWidth="1.300" /></svg></button>
          <div className="flex flex-1 items-end bg-linear-to-b from-[#b5d3f0] to-[#98b8dc]">
            <span className="rotate-180 pt-px text-[8px] leading-[10px] text-[#1d3150] [writing-mode:vertical-rl]">Terminal</span>
          </div>
        </aside>
        <div className="min-w-0 flex-1">
          <div className="flex border-t border-l border-[#a0a0a0] bg-white">
            <div className="min-w-0 flex-1 pb-[11px]"><HistoryTable /></div>
            <div className="mr-px flex w-3 shrink-0 flex-col justify-between border-x border-[#d8d8d8] bg-[#f7f7f7]">
              <button aria-label="Scroll up" className="flex h-[13px] items-center justify-center border-b border-[#d0d0d0]"><svg viewBox="0 0 7 4" className="h-1 w-[7px]"><path d="M.5 3.500l3-3 3 3" fill="none" stroke="#555" /></svg></button>
              <div>
                <div className="flex h-[59px] flex-col items-center justify-center gap-px border-y border-[#c4c4c4] bg-[#dfe3e3]">
                  <span className="h-px w-[6px] bg-[#555]" /><span className="h-px w-[6px] bg-[#555]" /><span className="h-px w-[6px] bg-[#555]" />
                </div>
                <button aria-label="Scroll down" className="flex h-[13px] w-full items-center justify-center"><svg viewBox="0 0 7 4" className="h-1 w-[7px]"><path d="M.5 .5l3 3 3-3" fill="none" stroke="#555" /></svg></button>
              </div>
            </div>
          </div>
          <div className="flex h-[17px] items-start border-t border-[#333] pl-[3px] leading-[13px] text-[#808080]">
            {bottomTabs.map(([name, count], i) =>
              i === 2 ? (
                <button key={name} className="h-[15px] border-x border-b-2 border-[#444] bg-white px-[5px] text-black">{name}</button>
              ) : (
                <React.Fragment key={name}>
                  <button className="px-[6px] pt-px">{name}{count && <span className="relative top-[3px] text-[7px] text-[#b03040]">{count}</span>}</button>
                  {i !== 1 && <span className="mt-[2px] h-[10px] w-px bg-[#888]" />}
                </React.Fragment>
              ),
            )}
          </div>
        </div>
      </section>

      <footer className="text-[8px]">
        <div className="mt-[2px] flex h-4 items-end border-t border-[#c4c4c4] bg-[#f7f7f7] leading-3">
          <p className="flex-1 pl-[2px]">For Help, press F1</p>
          <div className="h-[11px] w-[87px] border-l border-[#bbb] pl-1">Default</div>
          <div className="h-[11px] w-[77px] border-l border-[#bbb]" />
          <div className="h-[11px] w-[53px] border-l border-[#bbb]" />
          <div className="h-[11px] w-[53px] border-l border-[#bbb]" />
          <div className="h-[11px] w-[51px] border-l border-[#bbb]" />
          <div className="h-[11px] w-[52px] border-l border-[#bbb]" />
          <div className="h-[11px] w-[50px] border-l border-[#bbb]" />
          <div className="flex h-[11px] w-[96px] items-center gap-[3px] border-l border-[#bbb] pl-[3px]">
            <svg viewBox="0 0 18 10" className="h-[10px] w-[18px]"><path d="M1.500 0v10M4.500 0v10M7.500 0v10M10.500 0v10M13.500 0v10M16.500 0v10" stroke="#6f9a3c" strokeWidth="2" /><path d="M1.500 8v2M4.500 7v3M7.500 6v4M10.500 5v5M13.500 3v7M16.500 2v8" stroke="#1d4658" strokeWidth="2" /></svg>
            226290/103 kb
          </div>
        </div>
        <div className="h-[5px] bg-[#2f2f2f]" />
      </footer>

      <svg viewBox="0 0 1439 664" className="pointer-events-none absolute top-0 left-0 h-[664px] w-[1439px]" aria-hidden="true">
        {["M602 13L782 15", "M741 51L710 18M713 33L710 17L727 21", "M158 517L101 582M102 567L100 583L118 579", "M239 515L201 581M200 566L200 582L216 576", "M392 528L319 594M325 579L317 596L335 593"].map(arrow)}
      </svg>
    </div>
  );
}
